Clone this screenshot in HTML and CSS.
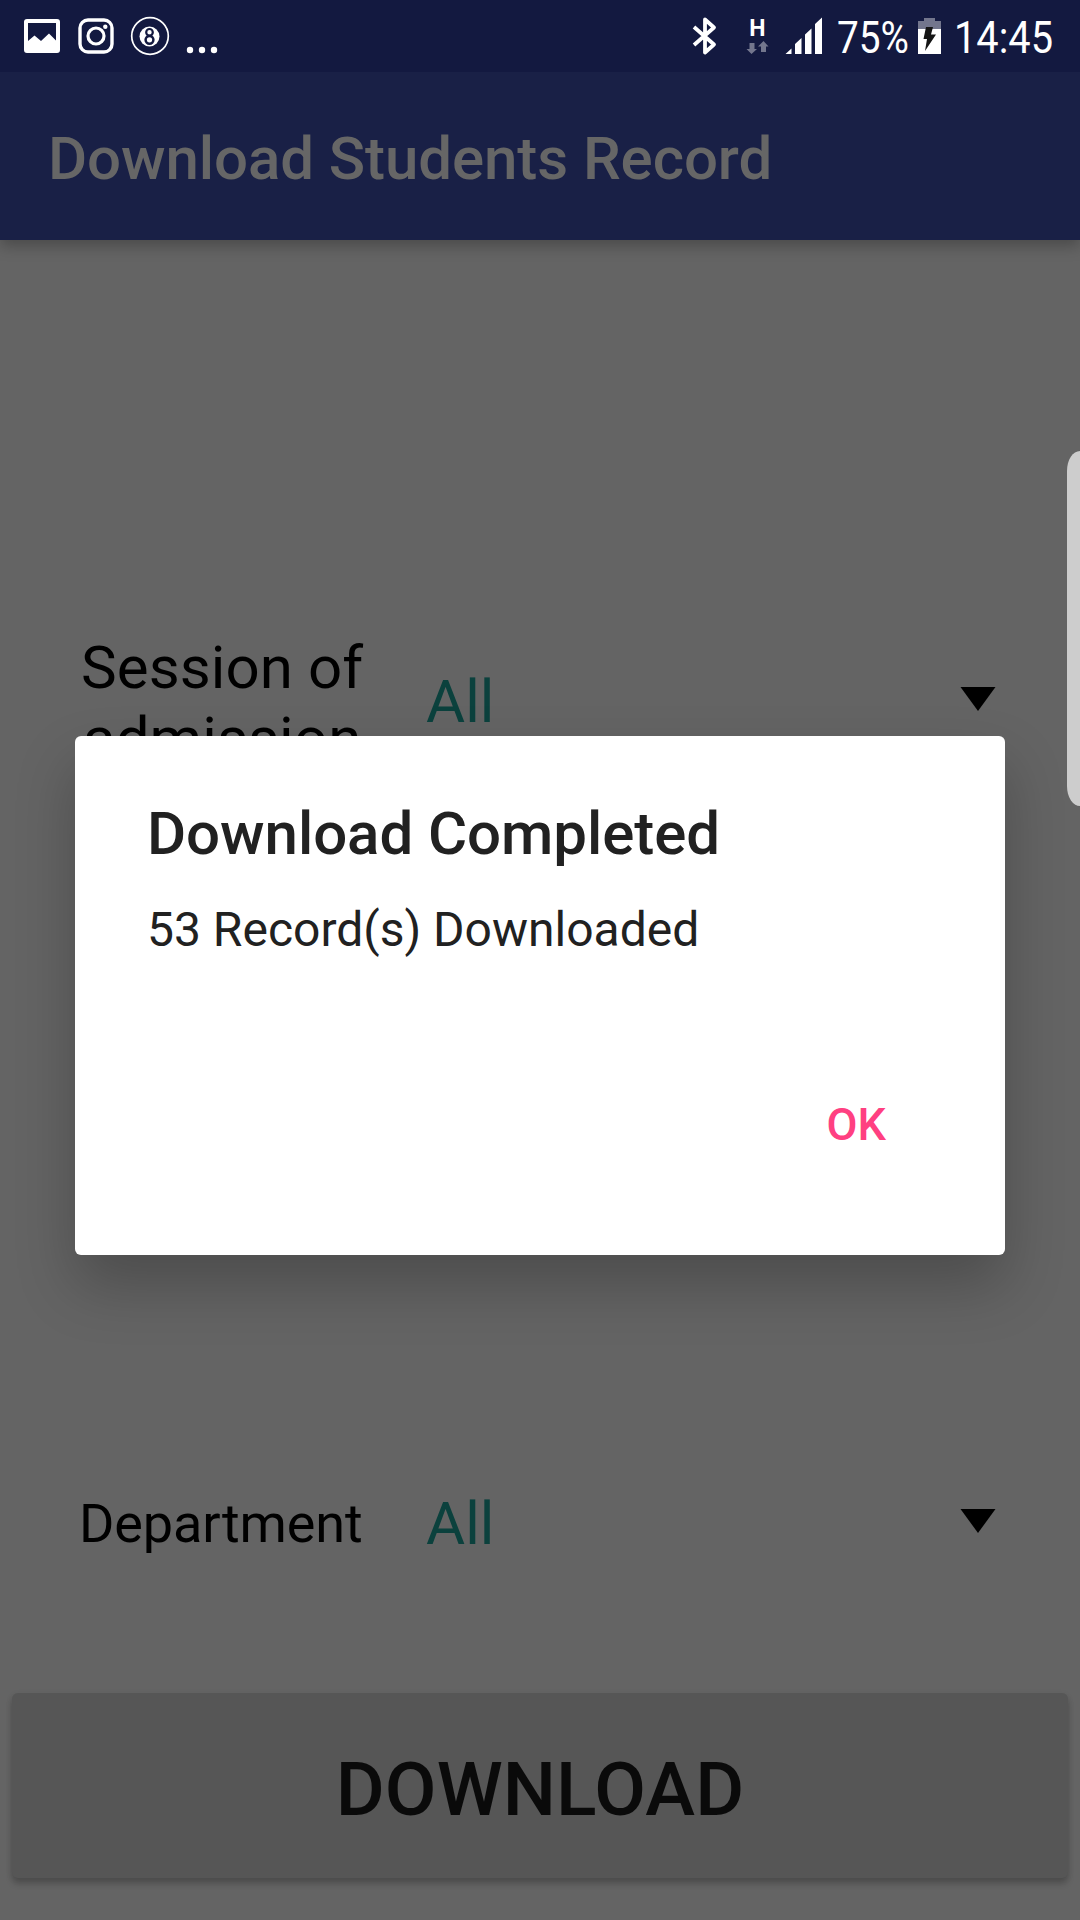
FILE: index.html
```html
<!DOCTYPE html>
<html lang="en">
<head>
<meta charset="utf-8">
<title>Download Students Record</title>
<link rel="stylesheet" href="styles.css">
</head>
<body>
<div class="screen">
  <header class="top">
    <div class="status">
      <svg class="status-icons" width="230" height="72" viewBox="0 0 230 72">
        <path fill="#fff" fill-rule="evenodd" d="M27 19H57Q60 19 60 22V50Q60 53 57 53H27Q24 53 24 50V22Q24 19 27 19ZM28 23V41L34.500 35.500L41 41L49 33.500L56 40.500V23Z"/>
        <rect x="80" y="20" width="32" height="32" rx="8" fill="none" stroke="#fff" stroke-width="3.400"/>
        <circle cx="96" cy="36" r="8" fill="none" stroke="#fff" stroke-width="3.200"/>
        <circle cx="105.300" cy="26.700" r="2.200" fill="#fff"/>
        <circle cx="150" cy="36" r="18.300" fill="none" stroke="#fff" stroke-width="1.700"/>
        <circle cx="149.500" cy="36.500" r="10" fill="#fff"/>
        <circle cx="149.500" cy="32.300" r="3.300" fill="none" stroke="#131940" stroke-width="2.200"/>
        <circle cx="149.500" cy="39.800" r="3.900" fill="none" stroke="#131940" stroke-width="2.500"/>
        <g fill="#fff"><circle cx="190" cy="50" r="3.200"/><circle cx="202" cy="50" r="3.200"/><circle cx="214" cy="50" r="3.200"/></g>
      </svg>
      <svg class="status-icons" width="410" height="72" viewBox="670 0 410 72">
        <path fill="none" stroke="#fff" stroke-width="3.800" stroke-linejoin="round" d="M694 27L714 44.500L705 52.500V19.500L714 27.500L694 45"/>
        <text class="net" x="749.300" y="36">H</text>
        <path fill="#73768d" d="M749.500 43H754.500V49H757L751.500 54L746.500 49H749.500ZM761 52H766V46.500H768.500L763.500 41L758 46.500H761Z"/>
        <path fill="#fff" d="M785.500 54L791.500 48.500V54ZM795 54V44L801.500 38V54ZM805 54V34.500L811.500 28.500V54ZM815 54V24L822 17.500V54Z"/>
        <text class="clock" x="837" y="53" textLength="72" lengthAdjust="spacingAndGlyphs">75%</text>
        <path fill="#73768d" d="M924 18H935V21H941V30H918V21H924Z"/>
        <rect x="918" y="29" width="23" height="25" fill="#fff"/>
        <path fill="#151515" d="M926 27H933L931 34.500H936L925 51L927 39H923.500Z"/>
        <text class="clock" x="954" y="53" textLength="99" lengthAdjust="spacingAndGlyphs">14:45</text>
      </svg>
    </div>
    <h1 class="app-title">Download Students Record</h1>
  </header>
  <main class="form">
    <div class="row row-session">
      <div class="label">Session of<br>admission</div>
      <div class="value">All</div>
      <svg class="arrow" width="36" height="26" viewBox="0 0 36 26"><path d="M0.500 1H35.500L18 25Z"/></svg>
    </div>
    <div class="row row-department">
      <div class="label label-small">Department</div>
      <div class="value">All</div>
      <svg class="arrow" width="36" height="26" viewBox="0 0 36 26"><path d="M0.500 1H35.500L18 25Z"/></svg>
    </div>
    <button class="download">DOWNLOAD</button>
  </main>
  <section class="dialog">
    <h2 class="dialog-title">Download Completed</h2>
    <p class="dialog-text">53 Record(s) Downloaded</p>
    <button class="ok">OK</button>
  </section>
  <div class="edge-handle"></div>
</div>
</body>
</html>
```
FILE: styles.css
```css
* { box-sizing: border-box; }
body { margin: 0; font-family: Roboto, "Liberation Sans", sans-serif; }
h1, h2, p { margin: 0; font-weight: 400; }
button { border: 0; padding: 0; font-family: inherit; }

.screen {
  position: relative;
  width: 1080px;
  height: 1920px;
  overflow: hidden;
  background: #646464;
}

.top {
  height: 240px;
  background: #192046;
  box-shadow: 0 6px 14px rgba(0, 0, 0, .26);
}
.status {
  display: flex;
  justify-content: space-between;
  height: 72px;
  background: #131940;
}
.status-icons { display: block; }
.clock { font-size: 45px; fill: #fff; }
.net { font-size: 23px; font-weight: 700; fill: #fff; }
.app-title {
  padding: 51px 0 0 48px;
  font-size: 60px;
  font-weight: 500;
  line-height: 71px;
  letter-spacing: -.08px;
  white-space: nowrap;
  color: #666;
}

.form { display: flex; flex-direction: column; }
.row {
  display: grid;
  grid-template-columns: 346px 534px 36px;
  align-items: center;
  padding-left: 80px;
}
.row-session { height: 142px; margin-top: 392px; }
.row-session .value { padding-bottom: 3px; }
.row-session .arrow { margin-bottom: 9px; }
.row-department { height: 71px; margin-top: 714px; }
.row-department .arrow { margin-bottom: 6px; }
.label {
  justify-self: start;
  padding-left: 1px;
  font-size: 60px;
  line-height: 71px;
  letter-spacing: .1px;
  text-align: center;
  white-space: nowrap;
  color: #000;
}
.label-small {
  padding-left: 0;
  margin-left: -1px;
  font-size: 54px;
  line-height: 63px;
  letter-spacing: -.1px;
}
.value { font-size: 60px; line-height: 71px; color: #0b413d; }
.arrow { display: block; fill: #000; }

.download {
  height: 185px;
  margin: 134px 12px 0;
  padding-top: 7px;
  border-radius: 6px;
  background: #565656;
  box-shadow: 0 6px 6px rgba(0, 0, 0, .18), 0 2px 6px rgba(0, 0, 0, .1);
  color: #0a0a0a;
  font-size: 75px;
  font-weight: 500;
  line-height: 88px;
  letter-spacing: .1px;
}

.dialog {
  position: absolute;
  left: 75px;
  top: 736px;
  width: 930px;
  height: 519px;
  padding: 62px 72px 0;
  display: flex;
  flex-direction: column;
  border-radius: 6px;
  background: #fff;
  box-shadow: 0 30px 60px rgba(0, 0, 0, .24);
  color: #212121;
}
.dialog-title {
  font-size: 60px;
  font-weight: 500;
  line-height: 71px;
  letter-spacing: -.06px;
  white-space: nowrap;
}
.dialog-text { margin-top: 33px; font-size: 48px; line-height: 56px; }
.ok {
  align-self: flex-end;
  margin: 140px 47px 0 0;
  background: none;
  color: #ff4081;
  font-size: 45px;
  font-weight: 500;
  line-height: 53px;
}

.edge-handle {
  position: absolute;
  right: 0;
  top: 451px;
  width: 13px;
  height: 355px;
  border-radius: 13px 0 0 13px / 20px 0 0 20px;
  background: #cdcdcd;
}
```
